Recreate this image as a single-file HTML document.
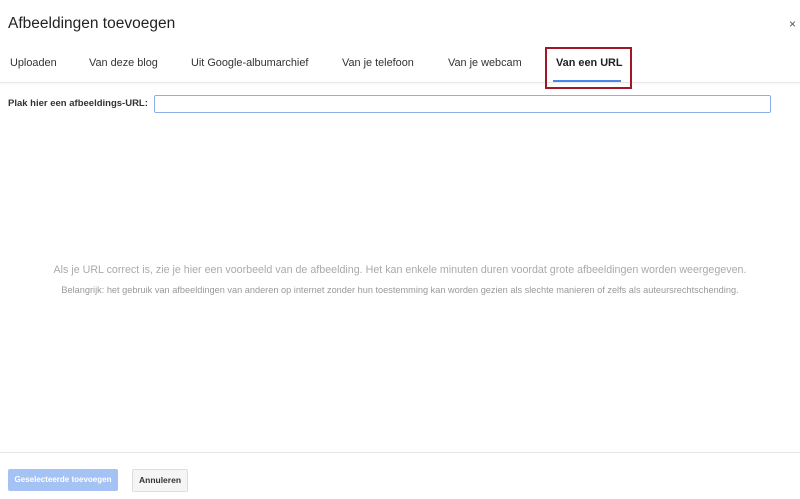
<!DOCTYPE html>
<html><head><style>
body{margin:0;width:800px;height:499px;background:#fff;font-family:"Liberation Sans",Arial,sans-serif;position:relative;overflow:hidden}
.a{position:absolute;white-space:nowrap}
.tab{position:absolute;top:57px;font-size:10.9px;color:#333}
</style></head><body>
<div class="a" style="left:8px;top:15px;font-size:15.5px;color:#222">Afbeeldingen toevoegen</div>
<div class="a" style="left:789px;top:17px;font-size:12px;color:#555">×</div>
<div class="tab" style="left:10px">Uploaden</div>
<div class="tab" style="left:89px">Van deze blog</div>
<div class="tab" style="left:191px">Uit Google-albumarchief</div>
<div class="tab" style="left:342px">Van je telefoon</div>
<div class="tab" style="left:448px">Van je webcam</div>
<div class="tab" style="left:556px;font-weight:bold;color:#222">Van een URL</div>
<div class="a" style="left:0;top:82px;width:800px;height:1px;background:#e8e8e8;box-shadow:0 1px 2px rgba(0,0,0,.08)"></div>
<div class="a" style="left:553px;top:80px;width:68px;height:2px;background:#4a86e8"></div>
<div class="a" style="left:545px;top:47px;width:83px;height:38px;border:2px solid #a01828"></div>
<div class="a" style="left:8px;top:98px;font-size:9.5px;font-weight:bold;color:#333">Plak hier een afbeeldings-URL:</div>
<div class="a" style="left:154px;top:95px;width:615px;height:16px;border:1px solid #8ab0e8;border-radius:2px"></div>
<div class="a" style="left:0;width:800px;top:264px;text-align:center;font-size:10.7px;color:#aaa">Als je URL correct is, zie je hier een voorbeeld van de afbeelding. Het kan enkele minuten duren voordat grote afbeeldingen worden weergegeven.</div>
<div class="a" style="left:0;width:800px;top:285px;text-align:center;font-size:9.2px;color:#999">Belangrijk: het gebruik van afbeeldingen van anderen op internet zonder hun toestemming kan worden gezien als slechte manieren of zelfs als auteursrechtschending.</div>
<div class="a" style="left:0;top:452px;width:800px;height:1px;background:#e5e5e5"></div>
<div class="a" style="left:8px;top:469px;width:110px;height:22px;background:#a4c2f4;border-radius:2px;color:#fff;font-size:8px;font-weight:bold;line-height:22px;text-align:center">Geselecteerde toevoegen</div>
<div class="a" style="left:132px;top:469px;width:54px;height:21px;background:#f5f5f5;border:1px solid #ddd;border-radius:2px;color:#333;font-size:8.5px;font-weight:bold;line-height:21px;text-align:center">Annuleren</div>
</body></html>
